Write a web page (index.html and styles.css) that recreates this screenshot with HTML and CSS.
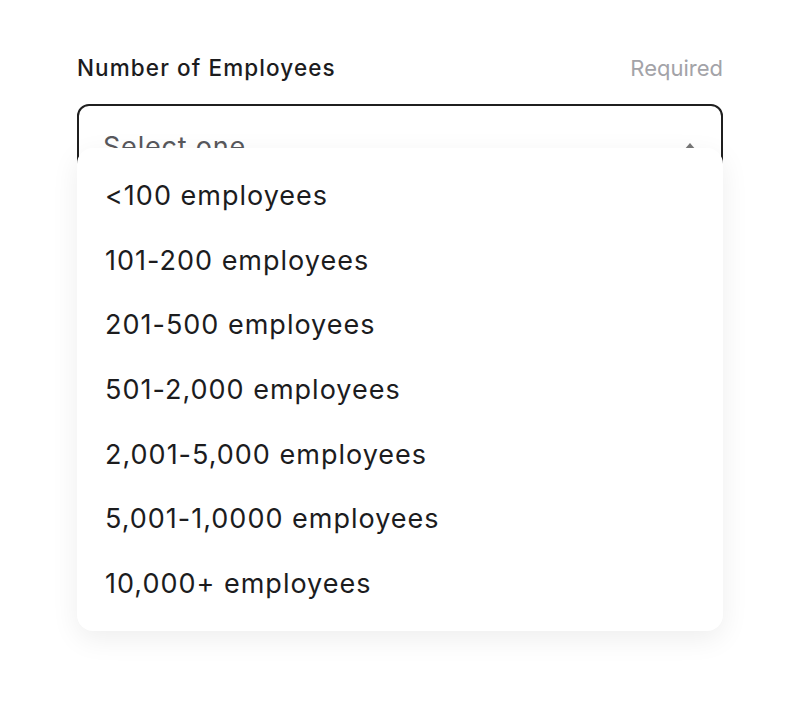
FILE: index.html
```html
<!DOCTYPE html>
<html lang="en">
<head>
    <meta charset="UTF-8">
    <meta name="viewport" content="width=device-width, initial-scale=1.0">
    <title>Number of Employees</title>
    <link rel="stylesheet" href="styles.css">
</head>
<body>

<div class="field">
    <!-- Label row -->
    <div class="field-head">
        <label class="field-label" for="employees">Number of Employees</label>
        <span class="field-hint">Required</span>
    </div>

    <!-- Select (open) -->
    <div class="select-wrap">
        <div class="select" id="employees">
            <span class="select-placeholder">Select one</span>
            <span class="select-arrow"></span>
        </div>

        <ul class="dropdown">
            <li>&lt;100 employees</li>
            <li>101-200 employees</li>
            <li>201-500 employees</li>
            <li>501-2,000 employees</li>
            <li>2,001-5,000 employees</li>
            <li>5,001-1,0000 employees</li>
            <li>10,000+ employees</li>
        </ul>
    </div>
</div>

</body>
</html>
```

FILE: styles.css
```css
/* Basic reset */
html, body {
    margin: 0;
    padding: 0;
    background-color: #fff;
    font-family: Inter, "Noto Sans", sans-serif;
}

body {
    min-height: 716px;
}

/* Form field */
.field {
    width: 646px;
    margin: 0 auto;
    padding-top: 55px;
}

.field-head {
    display: flex;
    justify-content: space-between;
    align-items: center;
    line-height: 26px;
    margin-bottom: 23px;
}

.field-label {
    font-size: 22.5px;
    font-weight: 500;
    letter-spacing: 1.1px;
    color: #1c1c1e;
}

.field-hint {
    font-size: 22px;
    color: #a3a3a8;
}

/* Select box */
.select-wrap {
    position: relative;
}

.select {
    display: flex;
    justify-content: space-between;
    align-items: center;
    height: 84px;
    padding: 0 25px 0 24px;
    border: 2px solid #1f1f1f;
    border-radius: 12px;
    box-sizing: border-box;
}

.select-placeholder {
    font-size: 27px;
    letter-spacing: 0.8px;
    color: #58585c;
}

.select-arrow {
    width: 0;
    height: 0;
    border-left: 6.5px solid transparent;
    border-right: 6.5px solid transparent;
    border-bottom: 7px solid #767676;
}

/* Open menu, lies over the select */
.dropdown {
    position: absolute;
    top: 44px;
    left: 0;
    right: 0;
    margin: 0;
    padding: 16px 0 14px;
    list-style: none;
    background-color: #fff;
    border-radius: 16px;
    box-shadow: 0 8px 28px rgba(0, 0, 0, 0.07);
}

.dropdown li {
    padding-left: 28px;
    font-size: 27px;
    letter-spacing: 1px;
    line-height: 64.67px;
    color: #1c1c1e;
}
```
